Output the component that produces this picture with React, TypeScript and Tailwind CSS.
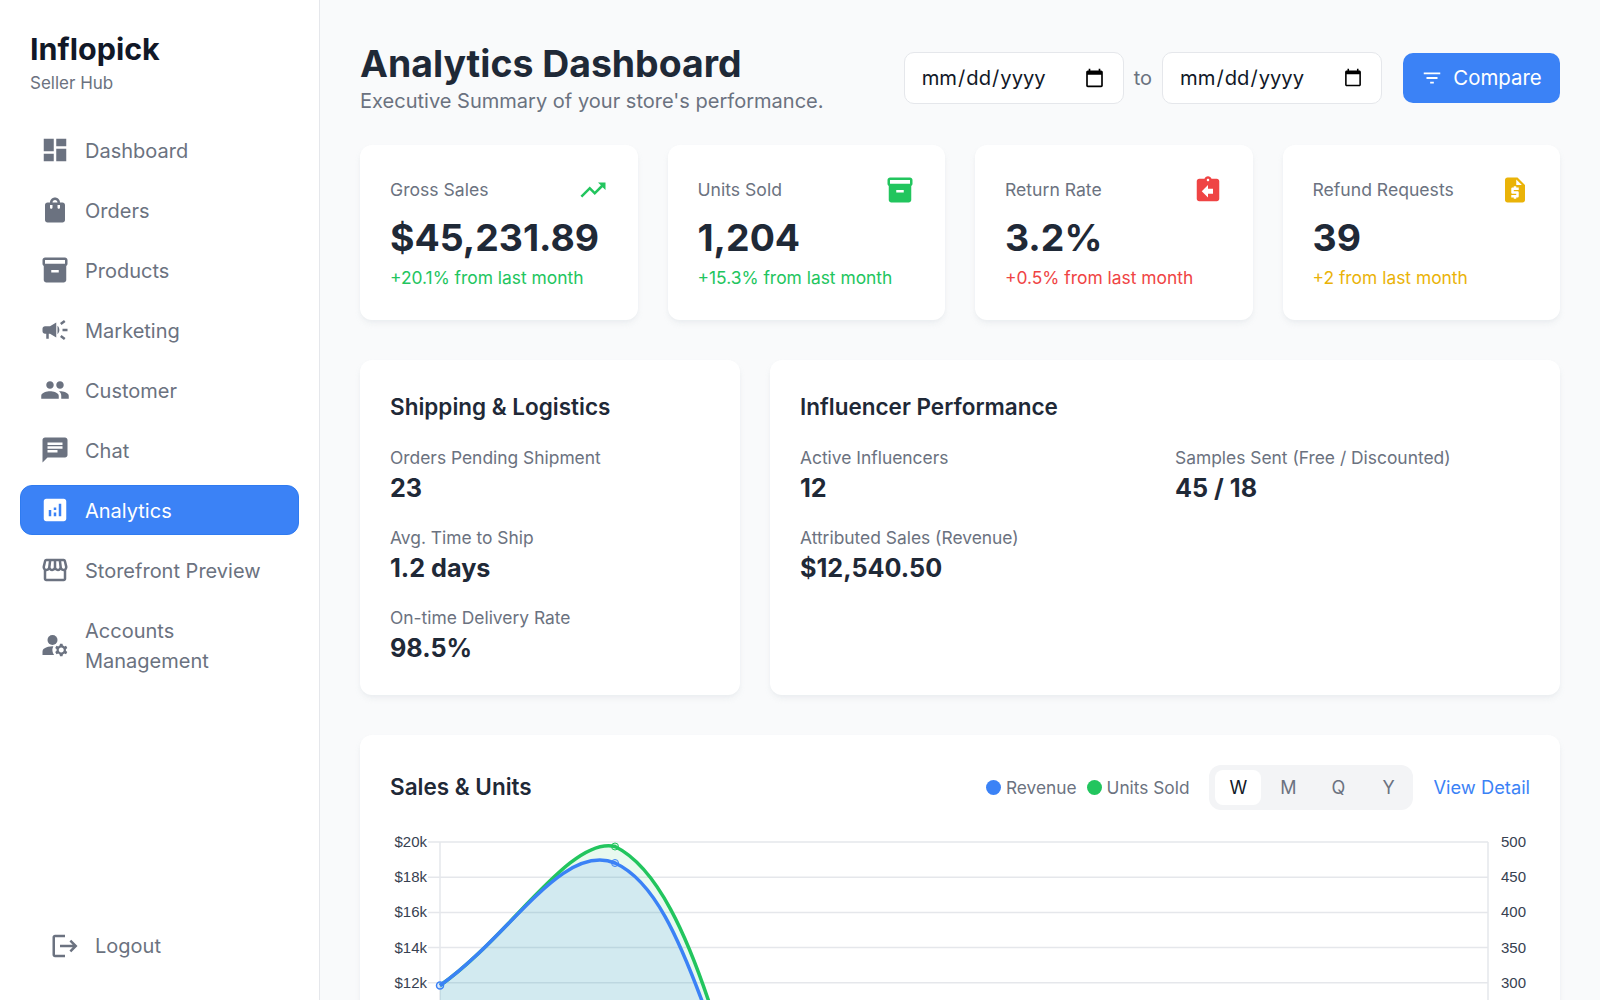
import type { ComponentType } from 'react';
import {
  MdDashboard,
  MdShoppingBag,
  MdInventory2,
  MdCampaign,
  MdPeople,
  MdChat,
  MdAnalytics,
  MdOutlineStorefront,
  MdManageAccounts,
  MdLogout,
  MdFilterList,
  MdTrendingUp,
  MdAssignmentReturn,
  MdRequestQuote,
} from 'react-icons/md';

type NavItem = { label: string; icon: ComponentType<{ size?: number; className?: string }>; active?: boolean };

const navItems: NavItem[] = [
  { label: 'Dashboard', icon: MdDashboard },
  { label: 'Orders', icon: MdShoppingBag },
  { label: 'Products', icon: MdInventory2 },
  { label: 'Marketing', icon: MdCampaign },
  { label: 'Customer', icon: MdPeople },
  { label: 'Chat', icon: MdChat },
  { label: 'Analytics', icon: MdAnalytics, active: true },
  { label: 'Storefront Preview', icon: MdOutlineStorefront },
  { label: 'Accounts Management', icon: MdManageAccounts },
];

const kpis = [
  { title: 'Gross Sales', value: '$45,231.89', delta: '+20.1% from last month', color: 'text-[#22c55e]', icon: MdTrendingUp },
  { title: 'Units Sold', value: '1,204', delta: '+15.3% from last month', color: 'text-[#22c55e]', icon: MdInventory2 },
  { title: 'Return Rate', value: '3.2%', delta: '+0.5% from last month', color: 'text-[#ef4444]', icon: MdAssignmentReturn },
  { title: 'Refund Requests', value: '39', delta: '+2 from last month', color: 'text-[#eab308]', icon: MdRequestQuote },
];

function Stat({ label, value }: { label: string; value: string }) {
  return (
    <div className="h-[60px]">
      <p className="text-[17.4px] leading-[27px] text-[#6b7280]">{label}</p>
      <p className="mt-px text-[25.2px] leading-[33px] font-bold text-[#1f2937]">{value}</p>
    </div>
  );
}

function SalesChart() {
  const left = ['$20k', '$18k', '$16k', '$14k', '$12k'];
  const right = ['500', '450', '400', '350', '300'];
  const blue = 'M50 155.5 C120 106.5 172 12 225 33 C262 50 288 100 326 210 L326 270 L50 270 Z';
  const green = 'M50 155.5 C120 106.5 180 6 225 16.5 C265 36 298 100 331 210 L331 270 L50 270 Z';
  return (
    <svg width="1140" height="230" viewBox="0 0 1140 230" className="block">
      {left.map((label, i) => (
        <g key={label}>
          <line x1="38" x2="1098" y1={i * 35.2 + 12} y2={i * 35.2 + 12} stroke="#e5e7eb" strokeWidth="1.5" />
          <text x="37" y={i * 35.2 + 17} textAnchor="end" fontSize="15" fill="#374151" fontFamily="Liberation Sans, sans-serif">{label}</text>
          <text x="1111" y={i * 35.2 + 17} textAnchor="start" fontSize="15" fill="#374151" fontFamily="Liberation Sans, sans-serif">{right[i]}</text>
        </g>
      ))}
      <line x1="50" x2="50" y1="12" y2="230" stroke="#e5e7eb" strokeWidth="1.5" />
      <line x1="1098" x2="1098" y1="12" y2="230" stroke="#e5e7eb" strokeWidth="1.5" />
      <path d={green} fill="#22c55e" fillOpacity="0.1" />
      <path d={blue} fill="#3b82f6" fillOpacity="0.12" />
      <path d={green.split(' L')[0]} fill="none" stroke="#22c55e" strokeWidth="3.5" />
      <path d={blue.split(' L')[0]} fill="none" stroke="#3b82f6" strokeWidth="3.5" />
      <circle cx="50" cy="155.5" r="3.5" fill="#3b82f6" fillOpacity="0.15" stroke="#3b82f6" strokeWidth="1.5" />
      <circle cx="225" cy="33" r="3.5" fill="#3b82f6" fillOpacity="0.15" stroke="#3b82f6" strokeWidth="1" />
      <circle cx="225" cy="16.5" r="3.5" fill="#22c55e" fillOpacity="0.15" stroke="#22c55e" strokeWidth="1" />
    </svg>
  );
}

export default function App() {
  return (
    <div className="flex h-screen overflow-hidden bg-[#f9fafb] font-['Inter',sans-serif]">
      <aside className="flex w-[320px] shrink-0 flex-col border-r border-[#e5e7eb] bg-white px-5">
        <div className="h-[125px] px-2.5 pt-[30px]">
          <h1 className="text-[30.5px] leading-[38px] font-bold text-[#111827]">Inflopick</h1>
          <p className="mt-[3px] text-[17px] leading-[25px] text-[#6b7280]">Seller Hub</p>
        </div>
        <nav className="flex flex-col gap-2.5">
          {navItems.map((item) => (
            <a
              key={item.label}
              className={
                item.active
                  ? 'flex items-center gap-[15px] rounded-xl border border-[#2f7bf0] bg-[#3b82f6] px-[19px] py-[9px] text-[20px] leading-[30px] text-white'
                  : 'flex items-center gap-[15px] rounded-xl px-5 py-2.5 text-[20px] leading-[30px] text-[#6b7280]'
              }
            >
              <item.icon size={30} className="shrink-0" />
              <span className="-mb-px pt-px">{item.label}</span>
            </a>
          ))}
        </nav>
        <a className="mt-auto mb-[29px] flex items-center gap-[15px] px-[30px] py-2.5 text-[20px] leading-[30px] text-[#6b7280]">
          <MdLogout size={30} className="shrink-0" />
          <span>Logout</span>
        </a>
      </aside>

      <main className="flex min-w-0 flex-1 flex-col gap-10 p-10">
        <header className="-mb-[11px] flex items-center justify-between">
          <div>
            <h2 className="mt-px -mb-px text-[37.4px] leading-[46px] font-bold text-[#1f2937]">Analytics Dashboard</h2>
            <p className="text-[20.05px] leading-[30px] text-[#6b7280]">Executive Summary of your store's performance.</p>
          </div>
          <div className="flex items-center gap-[21px]">
            <div className="flex items-center gap-2.5">
              <input type="date" className="h-[52px] w-[220px] rounded-[10px] border-[1.5px] border-[#e5e7eb] bg-white px-4 text-[20.2px] text-[#111827]" />
              <span className="text-[20px] text-[#6b7280]">to</span>
              <input type="date" className="h-[52px] w-[220px] rounded-[10px] border-[1.5px] border-[#e5e7eb] bg-white px-4 text-[20.2px] text-[#111827]" />
            </div>
            <button className="flex h-[50px] w-[157px] items-center justify-center gap-2.5 rounded-[10px] bg-[#3b82f6] text-[20.4px] text-white">
              <MdFilterList size={22} />
              Compare
            </button>
          </div>
        </header>

        <section className="grid grid-cols-4 gap-[30px]">
          {kpis.map((kpi) => (
            <div key={kpi.title} className="h-[175px] rounded-xl bg-white p-[30px] shadow-md shadow-gray-200/60">
              <div className="flex items-center justify-between">
                <span className="mb-0.5 text-[17.6px] leading-[27px] text-[#6b7280]">{kpi.title}</span>
                <kpi.icon size={30} className={kpi.color} />
              </div>
              <p className="mt-[9px] text-[37.4px] leading-[48px] font-bold text-[#1f2937]">{kpi.value}</p>
              <p className={`mt-[2px] text-[17.4px] leading-[27px] ${kpi.color}`}>{kpi.delta}</p>
            </div>
          ))}
        </section>

        <section className="flex gap-[30px]">
          <div className="h-[335px] w-[380px] rounded-xl bg-white p-[30px] shadow-md shadow-gray-200/60">
            <h3 className="mb-[21px] text-[22.5px] leading-[33px] font-semibold text-[#1f2937]">Shipping &amp; Logistics</h3>
            <div className="flex flex-col gap-5">
              <Stat label="Orders Pending Shipment" value="23" />
              <Stat label="Avg. Time to Ship" value="1.2 days" />
              <Stat label="On-time Delivery Rate" value="98.5%" />
            </div>
          </div>
          <div className="flex-1 rounded-xl bg-white p-[30px] shadow-md shadow-gray-200/60">
            <h3 className="mb-[21px] text-[22.5px] leading-[33px] font-semibold text-[#1f2937]">Influencer Performance</h3>
            <div className="grid grid-cols-2 gap-5">
              <Stat label="Active Influencers" value="12" />
              <Stat label="Samples Sent (Free / Discounted)" value="45 / 18" />
              <Stat label="Attributed Sales (Revenue)" value="$12,540.50" />
            </div>
          </div>
        </section>

        <section className="rounded-xl bg-white p-[30px] shadow-md shadow-gray-200/60">
          <div className="flex items-center justify-between">
            <h3 className="mb-0.5 text-[22.5px] leading-[33px] font-semibold text-[#1f2937]">Sales &amp; Units</h3>
            <div className="flex items-center gap-5">
              <div className="flex items-center gap-2.5 text-[17.3px] text-[#6b7280]">
                <span className="flex items-center gap-[5px]">
                  <span className="h-[15px] w-[15px] rounded-full bg-[#3b82f6]" />
                  Revenue
                </span>
                <span className="flex items-center gap-[5px]">
                  <span className="h-[15px] w-[15px] rounded-full bg-[#22c55e]" />
                  Units Sold
                </span>
              </div>
              <div className="flex h-[45px] w-[204px] items-center gap-1 rounded-xl bg-[#f3f4f6] py-[5px] pl-[6px] text-[18px] text-[#6b7280]">
                <span className="flex h-[35px] w-[46px] items-center justify-center rounded-lg bg-white text-[#111827]">W</span>
                <span className="flex h-[35px] w-[46px] items-center justify-center">M</span>
                <span className="flex h-[35px] w-[46px] items-center justify-center">Q</span>
                <span className="flex h-[35px] w-[46px] items-center justify-center">Y</span>
              </div>
              <a className="text-[18.3px] text-[#3b82f6]">View Detail</a>
            </div>
          </div>
          <div className="mt-5">
            <SalesChart />
          </div>
        </section>
      </main>
    </div>
  );
}
